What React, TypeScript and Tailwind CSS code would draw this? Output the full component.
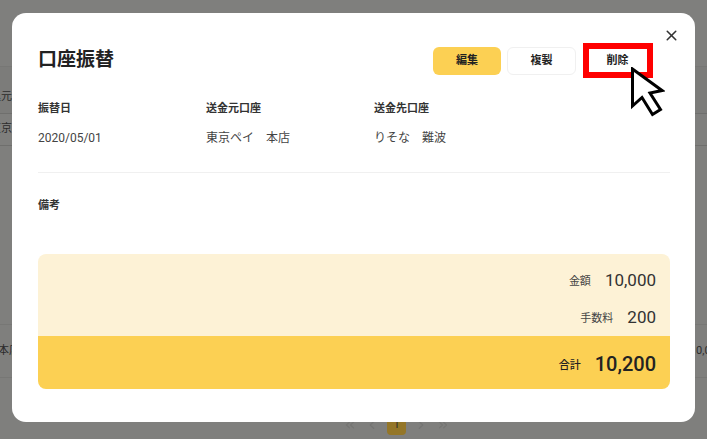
import { X, ChevronLeft, ChevronRight, ChevronsLeft, ChevronsRight } from 'lucide-react'

const fields = [
  { label: '振替日', value: '2020/05/01' },
  { label: '送金元口座', value: '東京ペイ　本店' },
  { label: '送金先口座', value: 'りそな　難波' },
]

function Backdrop() {
  return (
    <div className="h-full flex flex-col bg-[#7f7f7d] text-[11px] text-[#2c2c2c]">
      <div className="h-[66px]"></div>
      <div className="h-[47px] flex items-end pb-[8px] border-t border-[#777775] bg-[#7c7c7a]">
        <span className="ml-[-21px] whitespace-nowrap">振込元</span>
      </div>
      <div className="h-[33px] flex items-center border-t border-b border-[#6f6f6d] bg-[#7f7f7d]">
        <span className="ml-[-10px] whitespace-nowrap">東京</span>
      </div>
      <div className="h-[178px]"></div>
      <div className="h-[54px] flex items-center justify-between border-t border-b border-[#777775]">
        <span className="ml-[-2px] whitespace-nowrap">本店</span>
        <span className="mr-[-16px] whitespace-nowrap">0,000</span>
      </div>
      <div className="flex-1 flex items-start justify-center gap-[8px] pt-[37px] pl-[86px] text-[#757573]">
        <ChevronsLeft size={14} className="mt-[3px]" />
        <ChevronLeft size={14} className="mt-[3px]" />
        <div className="w-[19px] h-[20px] rounded-[4px] bg-[#947628] flex justify-center">
          <span className="leading-[20px] text-[#2c2c2c]">1</span>
        </div>
        <ChevronRight size={14} className="mt-[3px]" />
        <ChevronsRight size={14} className="mt-[3px]" />
      </div>
    </div>
  )
}

function Cursor() {
  return (
    <svg width="36" height="50" viewBox="0 0 36 50" className="absolute left-[629px] top-[67px]">
      <path d="M3.5 2 L3.5 39 L13 30.5 L23.5 47.5 L31.5 42.5 L21 26 L33 23.5 Z" fill="#fff" stroke="#000" strokeWidth="3" strokeLinejoin="miter" />
    </svg>
  )
}

export default function App() {
  return (
    <div className="relative w-[707px] h-[439px] overflow-hidden font-['Roboto','Noto_Sans_CJK_JP',sans-serif]">
      <Backdrop />

      {/* Modal */}
      <div className="absolute left-[12px] top-[13px] w-[683px] h-[409px] rounded-[14px] bg-white pl-[26px] pr-[25px] pt-[30px] text-[#333]">
        <button className="absolute right-[15px] top-[14px] text-[#333]">
          <X size={17} strokeWidth={2.2} />
        </button>

        <div className="flex items-center justify-between h-[32px]">
          <h2 className="text-[19px] leading-none font-bold text-[#222]">口座振替</h2>
          <div className="flex items-center gap-[7px] mr-[18px] mt-[4px]">
            <button className="w-[68px] h-[28px] mr-[-1px] rounded-[6px] bg-[#fcd053] text-[11px] font-bold text-[#222]">編集</button>
            <button className="w-[69px] h-[28px] rounded-[6px] bg-white border border-[#f0f0f0] text-[11px] font-bold text-[#222]">複製</button>
            <button className="w-[69px] h-[28px] rounded-[6px] bg-white text-[11px] font-bold text-[#222]">削除</button>
          </div>
        </div>

        <div className="flex mt-[26px]">
          {fields.map((f) => (
            <div key={f.label} className="w-[168px]">
              <div className="text-[11px] leading-[16px] font-bold">{f.label}</div>
              <div className="mt-[13px] text-[12px] leading-[16px] text-[#444]">{f.value}</div>
            </div>
          ))}
        </div>

        <div className="mt-[26px] border-t border-[#f0f0f0]"></div>

        <div className="mt-[25px] text-[11px] leading-[16px] font-bold">備考</div>

        <div className="mt-[40px] rounded-[8px] overflow-hidden">
          <div className="h-[82px] bg-[#fdf2d6] flex flex-col items-end pr-[14px] pt-[14px]">
            <div className="flex items-center h-[26px]">
              <span className="text-[11px] text-[#444] pt-[2px]">金額</span>
              <span className="ml-[14px] text-[17px] text-[#333]">10,000</span>
            </div>
            <div className="flex items-center h-[26px] mt-[11px]">
              <span className="text-[11px] text-[#444] pt-[2px]">手数料</span>
              <span className="ml-[14px] text-[17px] text-[#333]">200</span>
            </div>
          </div>
          <div className="h-[53px] bg-[#fcd053] flex items-center justify-end pr-[14px] pt-[2px]">
            <span className="text-[11px] font-medium text-[#222] pt-[5px]">合計</span>
            <span className="ml-[14px] text-[20px] font-medium text-[#222]">10,200</span>
          </div>
        </div>
      </div>

      {/* Annotation */}
      <div className="absolute left-[583px] top-[43px] w-[70px] h-[35px] border-[6px] border-[#ff0000]"></div>
      <Cursor />
    </div>
  )
}
